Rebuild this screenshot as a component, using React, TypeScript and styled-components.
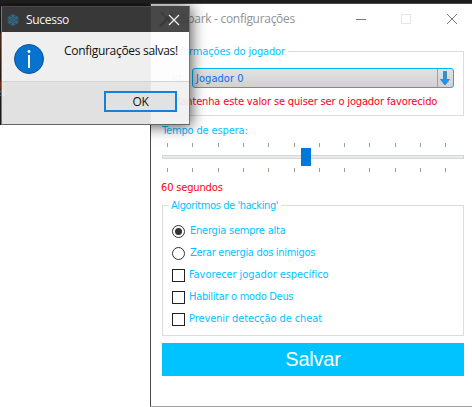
import React from "react";
import styled, { createGlobalStyle } from "styled-components";

const GlobalStyle = createGlobalStyle`
  * { box-sizing: border-box; }
  body { margin: 0; background: #fff; overflow: hidden; }
`;

const Desktop = styled.div`
  position: relative;
  width: 472px;
  height: 407px;
  overflow: hidden;
  padding: 3px 0 0 150px;
  background: linear-gradient(#1e1e1e 0 3px, transparent 3px);
  font-family: "DejaVu Sans Condensed", "DejaVu Sans", sans-serif;
  font-stretch: condensed;
  font-size: 11px;
  line-height: 14px;
  letter-spacing: -0.15px;
  color: #00c3ff;
`;

const Window = styled.section`
  height: 404px;
  border: solid #484848;
  border-width: 1px 0 1px 1px;
  border-bottom-color: #a2a2a2;
  background: #fff;
`;

const TitleBar = styled.header`
  display: flex;
  align-items: center;
  height: 30px;
  padding-left: 8px;
  color: #929292;
  font: 12px/16px "Open Sans", sans-serif;
`;

const WindowTitle = styled.span`
  width: 173px;
  margin: 0 0 0 6px;
  white-space: pre;
  letter-spacing: -0.3px;
`;

const WindowControls = styled.svg`
  display: block;
  width: 103px;
  height: 12px;
`;

const Content = styled.main`
  display: flex;
  flex-direction: column;
  width: 302px;
  margin-left: 11px;
  padding-top: 17px;
`;

const Group = styled.div<{ $height: number }>`
  height: ${(p) => p.$height}px;
  flex: none;
  border: 1px solid #dcdcdc;
  padding: 0 9px;
`;

const Legend = styled.div`
  width: fit-content;
  height: 14px;
  margin: -7px 0 0 -3px;
  padding: 0 3px 0 2px;
  background: #fff;
`;

const Text = styled.span<{ $spacing?: number }>`
  white-space: nowrap;
  letter-spacing: ${(p) => p.$spacing ?? -0.15}px;
`;

const PlayerRow = styled.div`
  display: flex;
  align-items: center;
  gap: 6px;
  height: 20px;
  margin-top: 9px;
`;

const IdLabel = styled.span`
  width: 14px;
`;

const Select = styled.div`
  display: flex;
  flex: none;
  width: 262px;
  height: 20px;
  border: 1px solid #00b4f5;
  border-radius: 3px;
  background: linear-gradient(#e2e2e2, #d1d1d1);
  color: #0a6cf8;
  line-height: 20px;
`;

const SelectValue = styled.div`
  flex: 1;
  padding-left: 3px;
`;

const SelectArrow = styled.div`
  width: 16px;
  border-left: 1px solid #a0a0a0;
  svg { display: block; }
`;

const Hint = styled.div`
  height: 14px;
  margin-top: 7px;
  color: #fb0014;
`;

const FieldLabel = styled.div`
  height: 14px;
  margin-top: 8px;
`;

const Slider = styled.svg`
  display: block;
  width: 302px;
  height: 36px;
  margin-top: 3px;
`;

const Duration = styled.div`
  height: 14px;
  margin: 4px 0 10px -1px;
  color: #fb0014;
`;

const Options = styled.div`
  display: flex;
  flex-direction: column;
  padding-top: 7px;
`;

const Option = styled.label<{ $gap: number }>`
  display: flex;
  align-items: center;
  gap: ${(p) => p.$gap}px;
  height: 22px;
`;

const Mark = styled.svg`
  display: block;
  flex: none;
  width: 13px;
  height: 13px;
`;

const SaveButton = styled.button`
  height: 33px;
  margin-top: 7px;
  padding: 0;
  border: 0;
  background: #00c3ff;
  color: #fff;
  font: 20px/33px "Liberation Sans", Arial, sans-serif;
  letter-spacing: -0.2px;
`;

const Backdrop = styled.div`
  position: absolute;
  left: 0;
  top: 0;
  width: 150px;
  height: 125px;
  padding-top: 86px;
  background: linear-gradient(90deg, transparent 5px, #1d1d1d 5px),
    linear-gradient(#1d1d1d 0 32px, #673d2a 34px, #30241f 78px, #a34218 84px, #252525 97px, #202020);
  color: #fff;
`;

const Dialog = styled.section`
  position: absolute;
  left: 1px;
  top: 6px;
  width: 189px;
  height: 119px;
  border: 1px solid #777;
  border-top-color: #484848;
  border-bottom-color: #666;
  box-shadow: 1px 1px 14px rgba(0, 0, 0, 0.7);
  clip-path: polygon(-1px -3px, 220px -3px, 220px 150px, 149px 150px, 149px 119px, -1px 119px);
  font-family: "Open Sans", sans-serif;
  font-stretch: normal;
  font-size: 12px;
  color: #111;
`;

const DialogTitle = styled.header`
  display: flex;
  align-items: center;
  height: 25px;
  padding: 0 9px 0 4px;
  background: rgba(58, 58, 58, 0.93);
  color: #f4f4f4;
`;

const DialogName = styled.span`
  flex: 1;
  margin-left: 6px;
  letter-spacing: -0.3px;
`;

const DialogBody = styled.div`
  display: flex;
  height: 49px;
  padding: 12px 0 0 12px;
  background: rgba(253, 253, 253, 0.94);
`;

const Message = styled.div`
  margin: 0 0 0 20px;
  white-space: nowrap;
  letter-spacing: -0.3px;
`;

const DialogFooter = styled.footer`
  display: flex;
  justify-content: flex-end;
  height: 43px;
  padding: 9px 12px 0 0;
  border-top: 1px solid #d4d4d4;
  background: rgba(240, 240, 240, 0.93);
`;

const OkButton = styled.button`
  width: 73px;
  height: 21px;
  padding: 0;
  border: 2px solid #1482d8;
  background: rgba(225, 225, 225, 0.93);
  color: #111;
  font: 12px/17px "Open Sans", sans-serif;
  letter-spacing: -0.3px;
`;

const ticks = [5, 30, 56, 81, 106, 132, 157, 182, 207, 233, 258, 283];

const options = [
  { label: "Energia sempre alta", kind: "radio", checked: true, spacing: -0.22 },
  { label: "Zerar energia dos inimigos", kind: "radio", checked: false, spacing: -0.31 },
  { label: "Favorecer jogador específico", kind: "check", checked: false, spacing: -0.07 },
  { label: "Habilitar o modo Deus", kind: "check", checked: false, spacing: -0.31 },
  { label: "Prevenir detecção de cheat", kind: "check", checked: false, spacing: -0.1 },
];

function OptionMark({ kind, checked }: { kind: string; checked: boolean }) {
  return (
    <Mark viewBox="0 0 13 13">
      {kind === "radio" ? (
        <circle cx="6.5" cy="6.5" r="6" fill="#fff" stroke="#333" />
      ) : (
        <rect x=".5" y=".5" width="12" height="12" fill="#fff" stroke="#222" />
      )}
      {checked && <circle cx="6.5" cy="6.5" r="3.5" fill="#333" />}
    </Mark>
  );
}

export default function App() {
  return (
    <Desktop>
      <GlobalStyle />
      <Window>
        <TitleBar>
          <svg width="16" height="16" viewBox="0 0 16 16">
            <path d="M2 1l11 12" stroke="#b0441e" strokeWidth="2" />
            <path d="M1 15L13 3" stroke="#143a78" strokeWidth="3" />
          </svg>
          <WindowTitle>Spark - configurações</WindowTitle>
          <WindowControls viewBox="0 0 103 12" fill="none">
            <path d="M2 6.5h10" stroke="#777" />
            <rect x="47.5" y="1.5" width="9" height="9" stroke="#e6e6e6" />
            <path d="M93 1l10 10M103 1L93 11" stroke="#777" />
          </WindowControls>
        </TitleBar>
        <Content>
          <Group $height={65}>
            <Legend><Text>Informações do jogador</Text></Legend>
            <PlayerRow>
              <IdLabel>Id:</IdLabel>
              <Select>
                <SelectValue><Text $spacing={0.05}>Jogador 0</Text></SelectValue>
                <SelectArrow>
                  <svg width="15" height="18" viewBox="0 0 15 18">
                    <path d="M5.500 2.5h3v8h3L7 16 2.500 10.500h3z" fill="#109cf5" stroke="#53758f" strokeWidth=".8" />
                  </svg>
                </SelectArrow>
              </Select>
            </PlayerRow>
            <Hint><Text>Mantenha este valor se quiser ser o jogador favorecido</Text></Hint>
          </Group>
          <FieldLabel><Text>Tempo de espera:</Text></FieldLabel>
          <Slider viewBox="0 0 302 36">
            {ticks.map((x) => (
              <path key={x} d={`M${x + 0.5} 2v4M${x + 0.5} 27v4`} stroke="#a09f92" />
            ))}
            <rect x=".5" y="14.500" width="301" height="3" fill="#e7eaea" stroke="#d6d6d6" />
            <rect x="139" y="7" width="10" height="18" fill="#0078d7" />
          </Slider>
          <Duration><Text>60 segundos</Text></Duration>
          <Group $height={131}>
            <Legend><Text $spacing={-0.4}>Algoritmos de 'hacking'</Text></Legend>
            <Options>
              {options.map((o) => (
                <Option key={o.label} $gap={o.kind === "radio" ? 5 : 4}>
                  <OptionMark kind={o.kind} checked={o.checked} />
                  <Text $spacing={o.spacing}>{o.label}</Text>
                </Option>
              ))}
            </Options>
          </Group>
          <SaveButton>Salvar</SaveButton>
        </Content>
      </Window>
      <Backdrop>s</Backdrop>
      <Dialog>
        <DialogTitle>
          <svg width="14" height="14" viewBox="-7 -7 14 14" fill="none" stroke="#326785">
            {[0, 60, 120].map((angle) => (
              <path key={angle} transform={`rotate(${angle})`} d="M0-6V6M-2-5L0-3l2-2M-2 5L0 3l2 2" strokeWidth="1.3" />
            ))}
            <circle r="3" />
          </svg>
          <DialogName>Sucesso</DialogName>
          <svg width="12" height="12" viewBox="0 0 12 12">
            <path d="M1 1l10 10M11 1L1 11" stroke="#eee" strokeWidth="1.3" />
          </svg>
        </DialogTitle>
        <DialogBody>
          <svg width="30" height="30" viewBox="0 0 30 30">
            <circle cx="15" cy="15" r="14.500" fill="#0873cf" stroke="#075598" />
            <path d="M15 11v13" stroke="#fff" strokeWidth="2" />
            <circle cx="15" cy="7.500" r="1.400" fill="#fff" />
          </svg>
          <Message>Configurações salvas!</Message>
        </DialogBody>
        <DialogFooter><OkButton>OK</OkButton></DialogFooter>
      </Dialog>
    </Desktop>
  );
}
